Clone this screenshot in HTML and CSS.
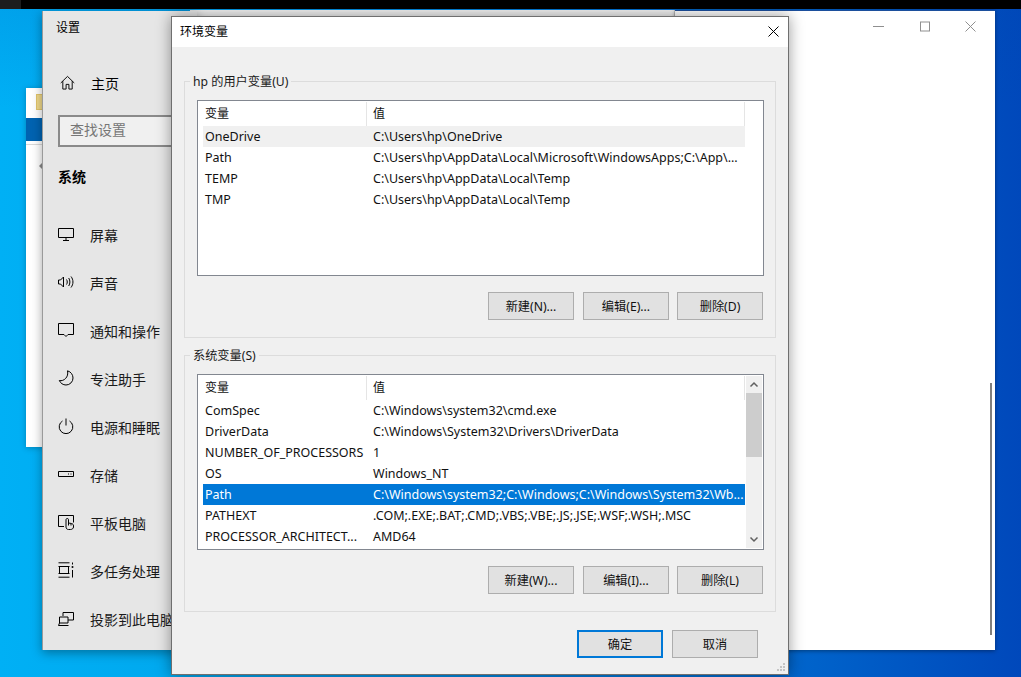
FILE: index.html
```html
<!DOCTYPE html>
<html lang="zh">
<head>
<meta charset="utf-8">
<title>环境变量</title>
<link rel="stylesheet" href="styles.css">
</head>
<body>
<div class="desktop">
  <div class="topbar"><div class="topbar-seg"></div></div>

  <div class="win explorer">
    <div class="ex-folder"></div>
    <div class="ex-ribbon"></div>
    <div class="ex-line"></div>
    <div class="ex-arrow"></div>
  </div>

  <div class="win backstrip"></div>

  <div class="win rightwin">
    <div class="caption">
      <svg class="cap-ic" viewBox="0 0 11 11"><path d="M0 5.500h11" /></svg>
      <svg class="cap-ic" viewBox="0 0 11 11"><rect x="1.500" y="1" width="9" height="9"/></svg>
      <svg class="cap-ic" viewBox="0 0 11 11"><path d="M.5 .5l10 10M10.500 .5l-10 10"/></svg>
    </div>
    <div class="rw-scroll"></div>
  </div>

  <div class="win settings">
    <div class="set-title">设置</div>
    <div class="nav-home">
      <svg class="ic home-ic" viewBox="0 0 16 16"><path d="M.8 8.500L8 1.500l7.200 7M3 6.500V15h3.500v-5h3v5H13V6.500"/></svg>
      <span>主页</span>
    </div>
    <div class="search">查找设置</div>
    <div class="set-section">系统</div>
    <div class="nav">
      <div class="nav-item"><svg class="ic" viewBox="0 0 16 16"><path d="M.5 2.500h15v9H.5zM8 11.500v3M5 14.500h6"/></svg><span>屏幕</span></div>
      <div class="nav-item"><svg class="ic" viewBox="0 0 16 16"><path d="M.5 6v4h2L5.500 13V3L2.500 6zM8.500 5.500c1 1.500 1 3.500 0 5M10.700 4c1.600 2.400 1.600 5.600 0 8M13 2.500c2.600 3.300 2.600 7.700 0 11"/></svg><span>声音</span></div>
      <div class="nav-item"><svg class="ic" viewBox="0 0 16 16"><path d="M.5 1.500h15v11h-5.500L8 14.500 6 12.500H.5z"/></svg><span>通知和操作</span></div>
      <div class="nav-item"><svg class="ic" viewBox="0 0 16 16"><path d="M9.500 .8c3.500 1 5.500 4 5.500 7.200a7 7 0 0 1-7 7c-3 0-5.500-1.800-6.700-4.500 4.500 1.200 9.700-3.500 8.200-9.700z"/></svg><span>专注助手</span></div>
      <div class="nav-item"><svg class="ic" viewBox="0 0 16 16"><path d="M8 .5v7M4.500 3A6.800 6.800 0 1 0 11.500 3"/></svg><span>电源和睡眠</span></div>
      <div class="nav-item"><svg class="ic" viewBox="0 0 16 16"><path d="M.5 5.500h15v5H.5zM10 8h1M12.500 8h1"/></svg><span>存储</span></div>
      <div class="nav-item"><svg class="ic" viewBox="0 0 16 16"><path d="M6 12.500H.5v-11h15v7M8 12V5.500c0-1.300 2.500-1.300 2.500 0V9l3 .5c1.300.3 2 1 2 2.500v1c0 1.500-1.500 2.500-3 2.500h-2c-1.500 0-2.500-1-2.500-2.500zM10.500 9v2.500M13 9.500v2"/></svg><span>平板电脑</span></div>
      <div class="nav-item"><svg class="ic" viewBox="0 0 16 16"><path d="M.5 .8h11M.5 15.200h11M1.500 4.500v7M10.500 4.500v7M.5 4.500h11M.5 11.500h11M14.500 .5v2M14.500 8v7.500"/><circle cx="14.500" cy="5" r="1" class="dot"/></svg><span>多任务处理</span></div>
      <div class="nav-item"><svg class="ic" viewBox="0 0 16 16"><path d="M5 6V2.500h10.500V10H10M.5 15.500l1-2.500V7h8.500v6H1.500M.5 15.500h10"/></svg><span>投影到此电脑</span></div>
    </div>
  </div>

  <div class="win dialog">
    <div class="dlg-title">
      <span>环境变量</span>
      <svg class="dlg-close" viewBox="0 0 11 11"><path d="M.5 .5l10 10M10.500 .5l-10 10"/></svg>
    </div>
    <div class="dlg-body">
      <fieldset class="group">
        <legend>hp 的用户变量(U)</legend>
        <div class="list">
          <div class="list-rows">
            <div class="row head"><span class="c1">变量</span><span class="c2">值</span></div>
            <div class="row hover"><span class="c1">OneDrive</span><span class="c2">C:\Users\hp\OneDrive</span></div>
            <div class="row"><span class="c1">Path</span><span class="c2">C:\Users\hp\AppData\Local\Microsoft\WindowsApps;C:\App\...</span></div>
            <div class="row"><span class="c1">TEMP</span><span class="c2">C:\Users\hp\AppData\Local\Temp</span></div>
            <div class="row"><span class="c1">TMP</span><span class="c2">C:\Users\hp\AppData\Local\Temp</span></div>
          </div>
        </div>
        <div class="btns">
          <button class="btn">新建(N)...</button>
          <button class="btn">编辑(E)...</button>
          <button class="btn">删除(D)</button>
        </div>
      </fieldset>
      <fieldset class="group second">
        <legend>系统变量(S)</legend>
        <div class="list">
          <div class="list-rows">
            <div class="row head"><span class="c1">变量</span><span class="c2">值</span></div>
            <div class="row"><span class="c1">ComSpec</span><span class="c2">C:\Windows\system32\cmd.exe</span></div>
            <div class="row"><span class="c1">DriverData</span><span class="c2">C:\Windows\System32\Drivers\DriverData</span></div>
            <div class="row"><span class="c1">NUMBER_OF_PROCESSORS</span><span class="c2">1</span></div>
            <div class="row"><span class="c1">OS</span><span class="c2">Windows_NT</span></div>
            <div class="row selected"><span class="c1">Path</span><span class="c2">C:\Windows\system32;C:\Windows;C:\Windows\System32\Wb...</span></div>
            <div class="row"><span class="c1">PATHEXT</span><span class="c2">.COM;.EXE;.BAT;.CMD;.VBS;.VBE;.JS;.JSE;.WSF;.WSH;.MSC</span></div>
            <div class="row"><span class="c1">PROCESSOR_ARCHITECT...</span><span class="c2">AMD64</span></div>
          </div>
          <div class="vscroll">
            <svg class="arrow" viewBox="0 0 16 17"><path d="M4.500 10.500L8 7l3.500 3.500"/></svg>
            <div class="track"><div class="thumb"></div></div>
            <svg class="arrow" viewBox="0 0 16 17"><path d="M4.500 6.500L8 10l3.500-3.500"/></svg>
          </div>
        </div>
        <div class="btns">
          <button class="btn">新建(W)...</button>
          <button class="btn">编辑(I)...</button>
          <button class="btn">删除(L)</button>
        </div>
      </fieldset>
      <div class="dlg-actions">
        <button class="btn primary">确定</button>
        <button class="btn">取消</button>
      </div>
    </div>
    <svg class="grip" viewBox="0 0 9 9"><path d="M6 0h2v2H6zM3 3h2v2H3zM6 3h2v2H6zM0 6h2v2H0zM3 6h2v2H3zM6 6h2v2H6z"/></svg>
  </div>
</div>
</body>
</html>
```

FILE: styles.css
```css
* { box-sizing: border-box; }
html, body { margin: 0; padding: 0; }
body {
  width: 1021px;
  height: 677px;
  overflow: hidden;
  font-family: "Noto Sans", "Noto Sans CJK SC", sans-serif;
  font-size: 12px;
  color: #000;
}
.desktop {
  position: relative;
  width: 1021px;
  height: 677px;
  overflow: hidden;
  background:
    linear-gradient(180deg, rgba(0,70,170,.14) 0%, rgba(0,70,170,0) 16%),
    linear-gradient(90deg, #00b0f5 0%, #00a8ee 18%, #0078d8 60%, #0062ca 80%, #0048bb 100%);
}
.topbar {
  height: 9px;
  background: #000;
}
.topbar-seg {
  width: 21px;
  height: 9px;
  background: #1d1d1d;
}
.win { position: absolute; }

.explorer {
  left: 26px;
  top: 88px;
  width: 60px;
  height: 359px;
  background: #fff;
  box-shadow: 0 1px 6px rgba(0,0,0,.25);
}
.ex-folder {
  position: absolute;
  left: 10px;
  top: 6px;
  width: 8px;
  height: 16px;
  background: #f0d98a;
  border: 1px solid #e2c56b;
}
.ex-ribbon {
  position: absolute;
  left: 0;
  top: 30px;
  width: 100%;
  height: 23px;
  background: #0063b1;
}
.ex-line {
  position: absolute;
  left: 0;
  top: 56px;
  width: 100%;
  height: 1px;
  background: #d9d9d9;
}
.ex-arrow {
  position: absolute;
  left: 13px;
  top: 75px;
  width: 0;
  height: 0;
  border: 3px solid transparent;
  border-left-width: 0;
  border-right-color: #8a8a8a;
}

.backstrip {
  left: 190px;
  top: 10px;
  width: 485px;
  height: 20px;
  background: #f2f2f2;
  border-right: 1px solid #d0d0d0;
}

.rightwin {
  left: 675px;
  top: 10px;
  width: 320px;
  height: 640px;
  background: #fff;
  border-top: 1px solid #1c4f9c;
  box-shadow: 0 1px 4px rgba(0,0,0,.4);
}
.caption {
  display: flex;
  justify-content: flex-end;
  align-items: center;
  gap: 35px;
  height: 32px;
  padding: 0 19px 1px 0;
}
.cap-ic {
  width: 11px;
  height: 11px;
  fill: none;
  stroke: #8f8f8f;
  stroke-width: 1;
}
.rw-scroll {
  position: absolute;
  left: 315px;
  top: 372px;
  width: 2px;
  height: 252px;
  background: #7f7f7f;
}

.settings {
  left: 42px;
  top: 11px;
  width: 155px;
  height: 639px;
  padding-left: 15px;
  background: #e6e6e6;
  border-left: 1px solid #9a9a9a;
  box-shadow: 0 3px 10px rgba(0,0,0,.35);
  color: #000;
  font-size: 14px;
  white-space: nowrap;
}
.set-title {
  height: 34px;
  line-height: 34px;
  margin-left: -2px;
  font-size: 12px;
}
.nav-home {
  display: flex;
  align-items: center;
  gap: 16px;
  height: 46px;
  margin: 15px 0 9px 2px;
}
.search {
  display: flex;
  align-items: center;
  width: 130px;
  height: 32px;
  padding: 0 0 4px 10px;
  background: #f0f0f0;
  border: 2px solid #8a8a8a;
  color: #767676;
  font-size: 14px;
}
.set-section {
  height: 32px;
  line-height: 32px;
  margin-top: 14px;
  margin-bottom: 18px;
  font-weight: 700;
  font-size: 14px;
}
.nav { display: flex; flex-direction: column; }
.nav-item {
  display: flex;
  align-items: center;
  gap: 16px;
  height: 48px;
  font-size: 14px;
  color: #1a1a1a;
}
.ic {
  flex: none;
  width: 16px;
  height: 16px;
  margin-bottom: 2px;
  fill: none;
  stroke: #000;
  stroke-width: 1;
}
.ic .dot { fill: #000; stroke: none; }
.home-ic { width: 15px; height: 15px; }

.dialog {
  left: 171px;
  top: 16px;
  width: 618px;
  height: 659px;
  display: flex;
  flex-direction: column;
  background: #f0f0f0;
  border: 1px solid #6f6f6f;
  box-shadow: 0 0 14px rgba(0,0,0,.4);
}
.dlg-title {
  flex: none;
  display: flex;
  justify-content: space-between;
  align-items: center;
  height: 30px;
  padding: 0 9px 2px 8px;
  background: #fff;
}
.dlg-close {
  width: 11px;
  height: 11px;
  fill: none;
  stroke: #000;
  stroke-width: 1;
}
.dlg-body {
  flex: 1;
  display: flex;
  flex-direction: column;
  padding: 25px 12px 0;
}
.group {
  margin: 0;
  padding: 0 12px;
  min-width: 0;
  height: 266px;
  border: 1px solid #dcdcdc;
}
.group.second { margin-top: 8px; }
.group legend {
  padding: 0 3px;
  margin-left: -7px;
  height: 18px;
  line-height: 20px;
  font-size: 12.200px;
  color: #1a1a1a;
}
.list {
  display: flex;
  width: 567px;
  height: 176px;
  margin-top: 10px;
  background: #fff;
  border: 1px solid #828790;
}
.list-rows {
  flex: none;
  width: 548px;
  padding-left: 5px;
}
.row {
  display: flex;
  align-items: center;
  height: 21px;
  width: 542px;
  white-space: nowrap;
  color: #111;
  font-size: 12.500px;
}
.row .c1 { width: 170px; padding-left: 2px; flex: none; }
.row.head {
  height: 25px;
  position: relative;
  padding-bottom: 2px;
  font-size: 12px;
}
.row.head::before,
.row.head::after {
  content: "";
  position: absolute;
  top: 1px;
  width: 1px;
  height: 24px;
  background: #e5e5e5;
}
.row.head::before { left: 163px; }
.row.head::after { left: 541px; }
.row.hover { background: #f0f0f0; }
.row.selected { background: #0078d7; color: #fff; }
.vscroll {
  display: flex;
  flex-direction: column;
  width: 16px;
  height: 172px;
  margin: 1px 0 0 0;
  background: #f0f0f0;
}
.arrow {
  flex: none;
  width: 16px;
  height: 17px;
  fill: none;
  stroke: #606060;
  stroke-width: 1.500;
}
.track { flex: 1; }
.thumb { width: 100%; height: 64px; background: #cdcdcd; }
.btns {
  display: flex;
  justify-content: flex-end;
  gap: 8px;
  margin-top: 16px;
  width: 566px;
}
.btns .btn:first-child { margin-right: 1px; }
.btn {
  width: 86px;
  height: 28px;
  padding: 0;
  background: #e1e1e1;
  border: 1px solid #adadad;
  font-family: inherit;
  font-size: 12.200px;
  color: #111;
}
.dlg-actions {
  display: flex;
  gap: 9px;
  justify-content: flex-end;
  margin-top: 18px;
  padding-right: 18px;
}
.btn.primary { border: 2px solid #0078d7; }
.grip {
  position: absolute;
  right: 2px;
  bottom: 2px;
  width: 9px;
  height: 9px;
  fill: #c4c4c4;
}
```
